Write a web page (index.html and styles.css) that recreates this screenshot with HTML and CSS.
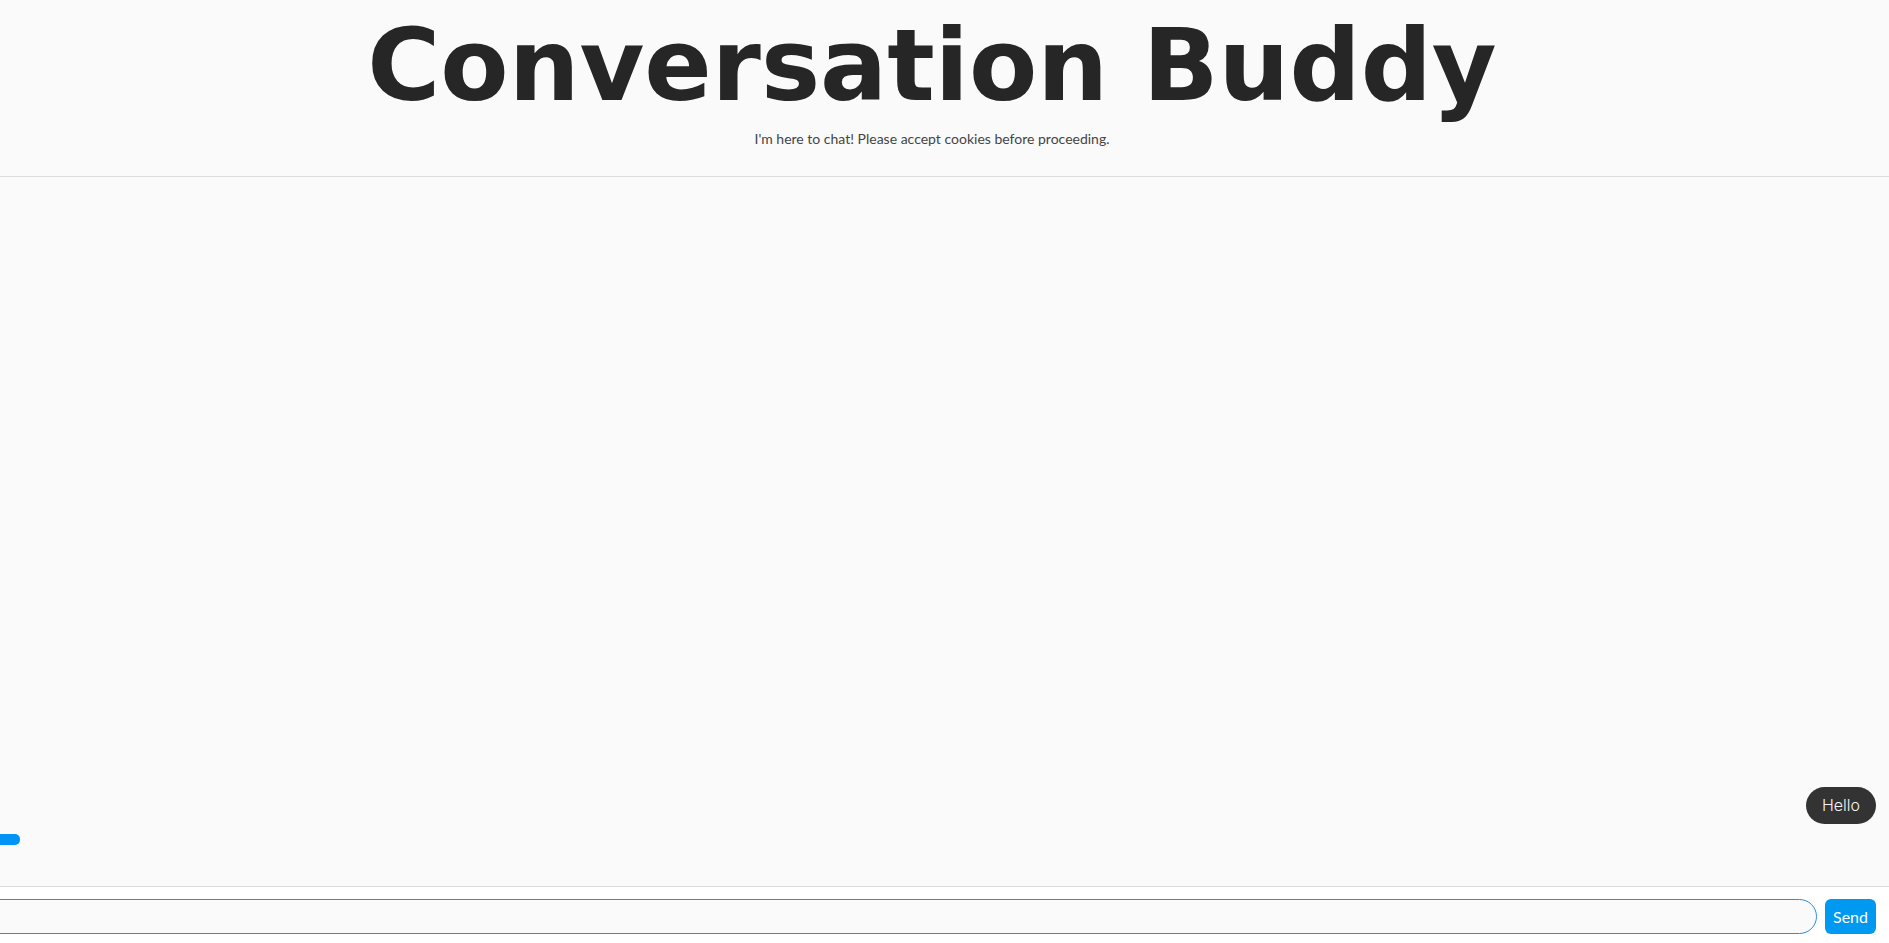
FILE: index.html
```html
<!DOCTYPE html>
<html lang="en">
<head>
<meta charset="utf-8">
<title>Conversation Buddy</title>
<link rel="stylesheet" href="styles.css">
</head>
<body>
<div class="app">
  <header class="header">
    <h1 class="title">Conversation Buddy</h1>
    <p class="subtitle">I'm here to chat! Please accept cookies before proceeding.</p>
  </header>
  <main class="chat">
    <div class="msg msg-user"><span class="bubble bubble-user">Hello</span></div>
    <div class="msg msg-bot"><span class="bubble bubble-bot"></span></div>
  </main>
  <footer class="composer">
    <input class="input" type="text" aria-label="Message">
    <button class="send" type="button">Send</button>
  </footer>
</div>
</body>
</html>
```
FILE: styles.css
```css
* { box-sizing: border-box; }
html, body { margin: 0; padding: 0; height: 100%; }
body {
  background: #fafafa;
  font-family: "Lato", "Open Sans", sans-serif;
  overflow: hidden;
}
.app {
  display: flex;
  flex-direction: column;
  height: 943px;
  margin-left: -25px;
}
.header {
  display: flex;
  flex-direction: column;
  align-items: center;
  padding-top: 13px;
  height: 177px;
  border-bottom: 1px solid #dcdcdc;
}
.title {
  margin: 0;
  font-family: "DejaVu Sans", sans-serif;
  font-weight: bold;
  font-size: 99.5px;
  line-height: 106px;
  color: #262626;
}
.subtitle {
  margin: 11px 0 0;
  font-size: 14px;
  line-height: 17px;
  color: #444444;
}
.chat {
  flex: 1;
  display: flex;
  flex-direction: column;
  justify-content: flex-end;
  padding: 0 13px 41px 0;
  gap: 10px;
}
.msg { display: flex; }
.msg-user { justify-content: flex-end; }
.msg-bot { justify-content: flex-start; }
.bubble-user {
  background: #333333;
  color: #f4f4f4;
  font-family: "Inter", "Open Sans", sans-serif;
  font-weight: 300;
  font-size: 16px;
  line-height: 37px;
  height: 37px;
  padding: 0 16px;
  border-radius: 19px;
}
.bubble-bot {
  display: block;
  background: #0094f5;
  height: 11px;
  width: 45px;
  border-radius: 5px;
}
.composer {
  display: flex;
  align-items: center;
  gap: 8px;
  background: #ffffff;
  border-top: 1px solid #dcdcdc;
  padding: 12px 13px 9px 0;
}
.input {
  flex: 1;
  height: 35px;
  background: #fafafa;
  border: 1px solid #2a8fe0;
  border-radius: 18px;
  outline: none;
  font-family: "Lato", sans-serif;
  font-size: 15px;
}
.send {
  width: 51px;
  height: 35px;
  background: #0099f2;
  color: #ffffff;
  border: none;
  border-radius: 6px;
  font-family: "Lato", "Open Sans", sans-serif;
  font-size: 16px;
  padding: 0;
}
```
